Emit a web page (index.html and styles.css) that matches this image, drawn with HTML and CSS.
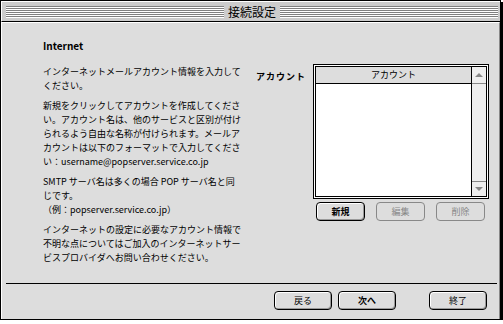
FILE: index.html
```html
<!DOCTYPE html>
<html lang="ja">
<head>
    <meta charset="UTF-8">
    <title>接続設定</title>
    <link rel="stylesheet" href="styles.css">
</head>
<body>
<div class="window">
    <div class="titlebar">
        <span class="stripes"></span>
        <span class="title">接続設定</span>
        <span class="stripes"></span>
    </div>
    <div class="content">
        <div class="main">
            <div class="info">
                <p class="head">Internet</p>
                <p class="first">インターネットメールアカウント情報を入力して<br>ください。</p>
                <p>新規をクリックしてアカウントを作成してくださ<br>い。アカウント名は、他のサービスと区別が付け<br>られるよう自由な名称が付けられます。メールア<br>カウントは以下のフォーマットで入力してくださ<br>い：username@popserver.service.co.jp</p>
                <p>SMTP サーバ名は多くの場合 POP サーバ名と同<br>じです。<br>（例：popserver.service.co.jp）</p>
                <p>インターネットの設定に必要なアカウント情報で<br>不明な点についてはご加入のインターネットサー<br>ビスプロバイダへお問い合わせください。</p>
            </div>
            <div class="label">アカウント</div>
            <div class="accounts">
                <div class="list">
                    <div class="list-inner">
                        <div class="list-main">
                            <div class="list-head">アカウント</div>
                            <div class="list-body"></div>
                        </div>
                        <div class="scrollbar">
                            <div class="arrow up"><span></span></div>
                            <div class="track"></div>
                            <div class="arrow down"><span></span></div>
                        </div>
                    </div>
                </div>
                <div class="list-buttons">
                    <button class="btn bold">新規</button>
                    <button class="btn off">編集</button>
                    <button class="btn off">削除</button>
                </div>
            </div>
        </div>
        <div class="separator"></div>
        <div class="footer">
            <button class="btn wide">戻る</button>
            <button class="btn wide bold">次へ</button>
            <button class="btn wide last">終了</button>
        </div>
    </div>
</div>
</body>
</html>
```

FILE: styles.css
```css
*{ margin:0; padding:0; box-sizing:border-box;}
body{ background:#fff; font-family:"Noto Sans CJK JP", "Noto Sans", sans-serif; color:#000;}
.window{ width:501px; height:320px; border:1px solid #000; box-shadow:2px 2px 0 #000; display:flex; flex-direction:column; background:#ddd;}

.titlebar{ height:21px; flex:none; background:#ccc; border-top:1px solid #fff; border-left:1px solid #fff; border-bottom:1px solid #000; display:flex; align-items:center; padding:0 2px 0 4px;}
.stripes{ flex:1; height:12px; background:repeating-linear-gradient(to bottom, #808080 0, #808080 1px, #fff 1px, #fff 2px);}
.title{ width:56px; text-align:center; font-size:12px; line-height:16px;}

.content{ flex:1; display:flex; flex-direction:column; border-top:1px solid #fff; border-left:1px solid #fff; border-right:1px solid #888;}
.main{ height:260px; display:flex;}

.info{ width:254px; padding:16px 0 0 41px; font-size:9px; line-height:14px; white-space:nowrap;}
.info p{ margin-top:6px;}
.info .head{ font-weight:bold; font-size:10px; margin-top:0;}
.info .first{ margin-top:12px;}

.label{ width:57px; padding-top:47px; font-size:9px; line-height:14px; font-weight:bold; letter-spacing:1px;}

.accounts{ width:176px; padding-top:41px;}
.list{ height:135px; border:1px solid #000; padding:1px; background:#fff;}
.list-inner{ height:100%; border:1px solid #000; display:flex;}
.list-main{ flex:1; display:flex; flex-direction:column;}
.list-head{ height:17px; background:#ddd; border-bottom:1px solid #000; font-size:9px; line-height:16px; text-align:center;}
.list-body{ flex:1; background:#fff;}
.scrollbar{ width:15px; border-left:1px solid #000; background:#eee; display:flex; flex-direction:column;}
.scrollbar .track{ flex:1;}
.arrow{ height:15px; display:flex; align-items:center; justify-content:center;}
.arrow.up{ border-bottom:1px solid #888; height:17px;}
.arrow.down{ border-top:1px solid #888;}
.arrow span{ width:0; height:0; border-left:4px solid transparent; border-right:4px solid transparent;}
.up span{ border-bottom:4px solid #888;}
.down span{ border-top:4px solid #888;}

.list-buttons{ display:flex; gap:11px; padding:3px 0 0 3px;}

.btn{ width:49px; height:19px; border:1px solid #000; border-radius:4px; background:#ddd; font-family:inherit; font-size:9px; line-height:15px; color:#000; box-shadow:inset 1px 1px 0 #fff, inset -1px -1px 0 #999;}
.btn.bold{ font-weight:bold;}
.btn.off{ color:#888; border-color:#888; box-shadow:none;}

.separator{ height:1px; width:491px; margin-left:4px; background:#000; flex:none;}
.footer{ display:flex; justify-content:flex-end; padding:7px 12px 0 0; gap:6px;}
.btn.wide{ width:58px;}
.btn.last{ margin-left:27px;}
```
